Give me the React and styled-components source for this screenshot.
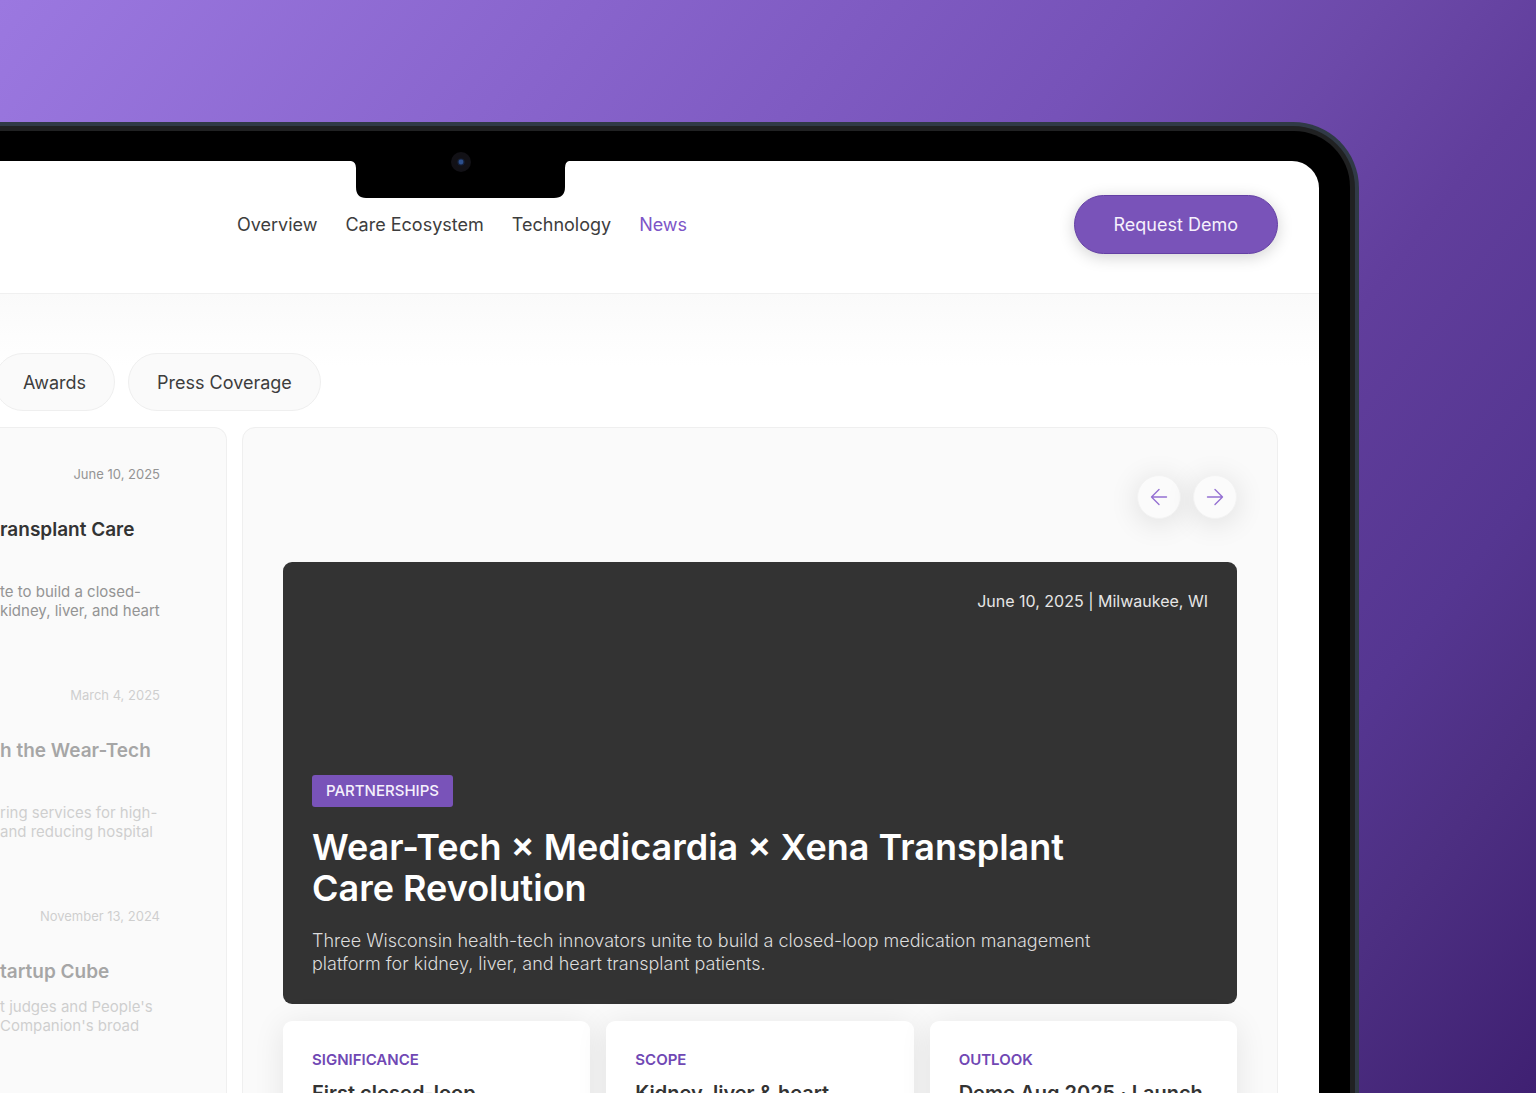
import React from 'react';
import styled, { createGlobalStyle } from 'styled-components';

const GlobalStyle = createGlobalStyle`
    * {
        box-sizing: border-box;
    }

    body {
        margin: 0;
        font-family: Inter, "Liberation Sans", sans-serif;
        color: #333;
    }

    h2, h3, p, ul {
        margin: 0;
        padding: 0;
    }

    button {
        font: inherit;
        cursor: pointer;
    }
`;

const Stage = styled.div`
    display: flex;
    height: 100vh;
    padding: 122px 177px 0 0;
    overflow: hidden;
    background: linear-gradient(128deg, #9b78e0 0%, #8864cc 25%, #7652b8 48%, #6c49a9 58%, #613e9c 67%, #553691 80%, #4d2f82 88%, #3f2072 100%);
`;

const Device = styled.div`
    display: flex;
    flex: 1;
    min-width: 0;
    border: solid #303a46;
    border-width: 4px 4px 0 0;
    border-radius: 0 66px 0 0;
    background: #202122;
`;

const Bezel = styled.div`
    position: relative;
    display: flex;
    flex: 1;
    min-width: 0;
    margin: 5px 5px 0 0;
    padding: 30px 31px 0 0;
    border-radius: 0 56px 0 0;
    background: #000;
`;

const Notch = styled.svg`
    position: absolute;
    top: 10px;
    left: 351px;
    width: 218px;
    height: 58px;
`;

const Screen = styled.div`
    flex: 1;
    min-width: 0;
    overflow: hidden;
    border-radius: 0 27px 0 0;
    background: #fff;
`;

const Header = styled.header`
    display: flex;
    align-items: center;
    justify-content: space-between;
    padding: 34px 41px 39px 237px;
    border-bottom: 1px solid #f0f0f0;
`;

const Nav = styled.nav`
    display: flex;
    gap: 28px;
    font-size: 18px;
    line-height: 24px;
`;

const NavLink = styled.a`
    color: ${props => props.$active ? '#7d55c7' : '#3d3d3d'};
    text-decoration: none;
`;

const DemoButton = styled.button`
    height: 59px;
    padding: 0 39px;
    border: 1px solid #6440a4;
    border-radius: 30px;
    background: #7953b9;
    box-shadow: 0 3px 16px rgba(0, 0, 0, 0.18);
    color: #f5f0fc;
    font-size: 18px;
`;

const Main = styled.main`
    padding: 59px 41px 0 0;
    background: linear-gradient(#fafafa, #fff 72px);
`;

const Tabs = styled.div`
    display: flex;
    gap: 13px;
    margin-left: -6px;
`;

const Tab = styled.button`
    height: 58px;
    padding: 0 28px;
    border: 1px solid #efefef;
    border-radius: 29px;
    background: #fafafa;
    color: #3d3d3d;
    font-size: 18px;
`;

const Columns = styled.div`
    display: grid;
    grid-template-columns: 227px 1fr;
    gap: 15px;
    margin-top: 16px;
`;

const NewsList = styled.ul`
    display: flex;
    flex-direction: column;
    gap: 66px;
    padding: 37px 66px 0 0;
    border: solid #efefef;
    border-width: 1px 1px 0 0;
    border-radius: 0 13px 0 0;
    background: #fafafa;
    list-style: none;
    white-space: nowrap;
`;

const NewsItem = styled.li`
    opacity: ${props => props.$faded ? 0.42 : 1};
`;

const NewsDate = styled.p`
    color: #949494;
    font-size: 13px;
    line-height: 18px;
    text-align: right;
`;

const NewsTitle = styled.h3`
    min-height: ${props => props.$lines * 27}px;
    margin: 33px 0 12px;
    font-size: 19px;
    font-weight: 600;
    line-height: 27px;
`;

const NewsText = styled.p`
    color: #949494;
    font-size: 15px;
    line-height: 19px;
`;

const Article = styled.section`
    min-width: 0;
    height: 900px;
    padding: 47px 40px 0;
    border: 1px solid #efefef;
    border-radius: 13px;
    background: #fafafa;
`;

const Arrows = styled.div`
    display: flex;
    justify-content: flex-end;
    gap: 12px;
`;

const ArrowButton = styled.button`
    display: grid;
    place-items: center;
    width: 44px;
    height: 44px;
    padding: 0;
    border: 1px solid #f3f3f3;
    border-radius: 50%;
    background: #fbfbfb;
    box-shadow: 0 4px 30px rgba(0, 0, 0, 0.12);
    color: #9470d2;
`;

const Hero = styled.div`
    display: flex;
    flex-direction: column;
    align-items: flex-start;
    min-height: 442px;
    margin-top: 43px;
    padding: 28px 29px 29px;
    border-radius: 9px;
    background: #333;
    color: #fff;
`;

const HeroDate = styled.p`
    align-self: flex-end;
    margin-bottom: auto;
    color: #e6e6e6;
    font-size: 16px;
    line-height: 22px;
`;

const Tag = styled.span`
    padding: 0 14px;
    border-radius: 3px;
    background: #7953b9;
    color: #f5f0fc;
    font-size: 15px;
    font-weight: 500;
    line-height: 32px;
`;

const HeroTitle = styled.h2`
    margin: 20px 0;
    font-size: 36px;
    font-weight: 600;
    line-height: 41px;
`;

const HeroText = styled.p`
    color: #dcdcdc;
    font-size: 18px;
    font-weight: 300;
    line-height: 23px;
`;

const Cards = styled.div`
    display: grid;
    grid-template-columns: repeat(3, 1fr);
    gap: 16px;
    margin-top: 17px;
`;

const Card = styled.div`
    height: 220px;
    padding: 29px;
    border-radius: 9px;
    background: #fff;
    box-shadow: 0 4px 32px rgba(0, 0, 0, 0.09);
    white-space: nowrap;
`;

const CardLabel = styled.p`
    color: #7048b4;
    font-size: 15px;
    font-weight: 600;
    line-height: 20px;
`;

const CardTitle = styled.h3`
    margin-top: 10px;
    font-size: 20px;
    font-weight: 600;
    line-height: 27px;
`;

const links = ['Overview', 'Care Ecosystem', 'Technology', 'News'];

const news = [
    { date: 'June 10, 2025', title: 'ransplant Care', lines: 2, text: ['te to build a closed-', 'kidney, liver, and heart'] },
    { date: 'March 4, 2025', title: 'h the Wear-Tech', lines: 2, text: ['ring services for high-', 'and reducing hospital'] },
    { date: 'November 13, 2024', title: 'tartup Cube', lines: 1, text: ['t judges and People\'s', 'Companion\'s broad'] },
];

const cards = [
    { label: 'SIGNIFICANCE', title: 'First closed-loop' },
    { label: 'SCOPE', title: 'Kidney, liver & heart' },
    { label: 'OUTLOOK', title: 'Demo Aug 2025 · Launch' },
];

const Arrow = ({ d }) => (
    <svg width="18" height="18" viewBox="0 0 18 18" fill="none" stroke="currentColor" strokeWidth="1.4" strokeLinecap="round" strokeLinejoin="round" aria-hidden="true">
        <path d={d} />
    </svg>
);

export default function App() {
    return (
        <Stage>
            <GlobalStyle />
            <Device>
                <Bezel>
                    <Screen>
                        <Header>
                            <Nav>
                                {links.map(link => (
                                    <NavLink key={link} href="#" $active={link === 'News'}>{link}</NavLink>
                                ))}
                            </Nav>
                            <DemoButton>Request Demo</DemoButton>
                        </Header>
                        <Main>
                            <Tabs>
                                <Tab>Awards</Tab>
                                <Tab>Press Coverage</Tab>
                            </Tabs>
                            <Columns>
                                <NewsList>
                                    {news.map((item, i) => (
                                        <NewsItem key={item.date} $faded={i > 0}>
                                            <NewsDate>{item.date}</NewsDate>
                                            <NewsTitle $lines={item.lines}>{item.title}</NewsTitle>
                                            <NewsText>{item.text[0]}<br />{item.text[1]}</NewsText>
                                        </NewsItem>
                                    ))}
                                </NewsList>
                                <Article>
                                    <Arrows>
                                        <ArrowButton aria-label="Previous">
                                            <Arrow d="M16.5 9H1.5M9 1.5L1.5 9L9 16.5" />
                                        </ArrowButton>
                                        <ArrowButton aria-label="Next">
                                            <Arrow d="M1.5 9H16.5M9 1.5L16.5 9L9 16.5" />
                                        </ArrowButton>
                                    </Arrows>
                                    <Hero>
                                        <HeroDate>June 10, 2025 | Milwaukee, WI</HeroDate>
                                        <Tag>PARTNERSHIPS</Tag>
                                        <HeroTitle>Wear-Tech × Medicardia × Xena Transplant<br />Care Revolution</HeroTitle>
                                        <HeroText>
                                            Three Wisconsin health-tech innovators unite to build a closed-loop medication management<br />
                                            platform for kidney, liver, and heart transplant patients.
                                        </HeroText>
                                    </Hero>
                                    <Cards>
                                        {cards.map(card => (
                                            <Card key={card.label}>
                                                <CardLabel>{card.label}</CardLabel>
                                                <CardTitle>{card.title}</CardTitle>
                                            </Card>
                                        ))}
                                    </Cards>
                                </Article>
                            </Columns>
                        </Main>
                    </Screen>
                    <Notch viewBox="0 0 218 58" aria-hidden="true">
                        <path d="M0 20H218Q214 21 214 27V46Q214 57 203 57H15Q5 57 5 46V27Q5 21 0 20Z" fill="#000" />
                        <circle cx="110" cy="21" r="10" fill="#121116" />
                        <circle cx="110" cy="21" r="3.6" fill="#16233f" />
                        <circle cx="110" cy="21" r="2.4" fill="#2c4f8c" />
                    </Notch>
                </Bezel>
            </Device>
        </Stage>
    );
}
